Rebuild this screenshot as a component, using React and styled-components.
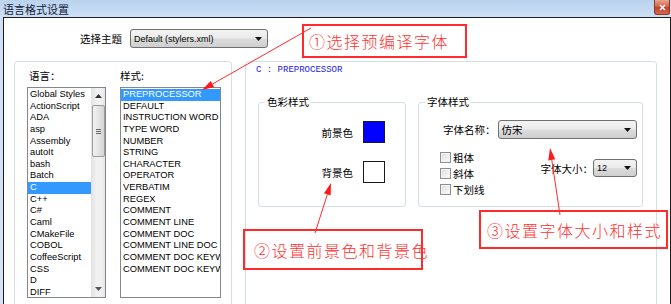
import React from 'react';
import styled, { createGlobalStyle } from 'styled-components';

const GlobalStyle = createGlobalStyle`
  html, body {
    margin: 0;
    padding: 0;
    background: #fff;
  }
  body {
    font-family: "Liberation Sans", "Noto Sans CJK SC", sans-serif;
    color: #000;
  }
`;

const Window = styled.div`
  position: relative;
  width: 671px;
  height: 304px;
  overflow: hidden;
  display: flex;
  flex-direction: column;
  background: linear-gradient(180deg, #bad2ee 0px, #cde0f5 17px, #d4e4f6 100%);
`;

const TitleBar = styled.div`
  flex: none;
  height: 17px;
  display: flex;
  align-items: center;
  padding: 0 1px 0 3px;
  font-family: "Noto Sans CJK SC", sans-serif;
  font-size: 11px;
  color: #14233a;
`;

const CloseBtn = styled.div`
  margin-left: auto;
  align-self: flex-start;
  width: 16px;
  height: 15px;
  box-sizing: border-box;
  border: 1px solid #8a3a2c;
  border-top: none;
  border-radius: 0 0 3px 3px;
  background: linear-gradient(180deg, #e9a490 0%, #d3644a 45%, #c2412a 55%, #d86a4c 100%);
  display: flex;
  align-items: center;
  justify-content: center;
`;

const Body = styled.div`
  flex: 1;
  margin-left: 3px;
  border: 1px solid #1c1c1c;
  border-bottom: none;
  background: #fff;
  display: flex;
  flex-direction: column;
  overflow: hidden;
`;

const ThemeRow = styled.div`
  display: flex;
  align-items: center;
  gap: 8px;
  padding: 11px 0 0 76px;
`;

const CnLabel = styled.span`
  font-family: "Noto Sans CJK SC", sans-serif;
  font-size: 10.5px;
  line-height: 13px;
  white-space: nowrap;
`;

const Select = styled.div`
  position: relative;
  box-sizing: border-box;
  width: ${(p) => p.$w}px;
  height: ${(p) => p.$h || 19}px;
  flex: ${(p) => (p.$grow ? 1 : 'none')};
  border: 1px solid #707070;
  border-radius: 3px;
  background: linear-gradient(180deg, #f3f3f3 0%, #ebebeb 48%, #dcdcdc 52%, #cfcfcf 100%);
  display: flex;
  align-items: center;
  padding: 0 16px 0 3px;
  font-size: 9px;
  white-space: nowrap;
  overflow: hidden;
`;

const Caret = styled.svg`
  position: absolute;
  right: 5px;
  top: 50%;
  margin-top: -2px;
`;

const MainRow = styled.div`
  display: flex;
  gap: 13px;
  margin-top: 13px;
  padding-left: 10px;
`;

const LeftPanel = styled.div`
  box-sizing: border-box;
  width: 218px;
  height: 260px;
  border: 1px solid #d5dfe5;
  border-radius: 3px;
  padding: 7px 0 0 12px;
  display: flex;
  gap: 14px;
`;

const ListColumn = styled.div`
  display: flex;
  flex-direction: column;
  width: ${(p) => p.$w}px;
`;

const ListLabel = styled(CnLabel)`
  padding-left: ${(p) => p.$indent || 0}px;
  margin-bottom: 5px;
`;

const ListBox = styled.div`
  box-sizing: border-box;
  height: 211px;
  border: 1px solid #828790;
  background: #fff;
  display: flex;
  overflow: hidden;
`;

const ListItems = styled.div`
  flex: 1;
  min-width: 0;
  padding-top: 1px;
  overflow: hidden;
`;

const ListItem = styled.div`
  height: 11.65px;
  line-height: 11.65px;
  font-size: 9.3px;
  padding-left: 2px;
  white-space: nowrap;
  overflow: hidden;
  background: ${(p) => (p.$selected ? '#3399ff' : 'transparent')};
  color: ${(p) => (p.$selected ? '#fff' : '#000')};
`;

const ScrollBar = styled.div`
  flex: none;
  width: 14px;
  display: flex;
  flex-direction: column;
  align-items: center;
  background: linear-gradient(90deg, #e3e3e3 0%, #f1f1f1 40%, #f1f1f1 70%, #e6e6e6 100%);
`;

const ScrollButton = styled.div`
  flex: none;
  height: 16px;
  width: 100%;
  display: flex;
  align-items: center;
  justify-content: center;
  margin-top: ${(p) => (p.$bottom ? 'auto' : 0)};
`;

const Thumb = styled.div`
  box-sizing: border-box;
  margin-top: 1px;
  width: 13px;
  height: 52px;
  border: 1px solid #9b9b9b;
  border-radius: 2px;
  background: linear-gradient(90deg, #f2f2f2 0%, #e4e4e4 50%, #d4d4d4 100%);
  display: flex;
  align-items: center;
  justify-content: center;
`;

const RightPanel = styled.div`
  box-sizing: border-box;
  width: 412px;
  height: 260px;
  border: 1px solid #d5dfe5;
  border-radius: 3px;
  padding: 2px 0 0 10px;
`;

const StyleHeader = styled.div`
  font-family: "Liberation Mono", monospace;
  font-size: 9px;
  line-height: 12px;
  color: #2020e8;
  white-space: pre;
`;

const Groups = styled.div`
  display: flex;
  gap: 12px;
  margin-top: 20px;
  padding-left: 2px;
`;

const Group = styled.fieldset`
  box-sizing: border-box;
  width: ${(p) => p.$w}px;
  margin: 0;
  padding: 0;
  border: 1px solid #d5dfe5;
  border-radius: 3px;
`;

const Legend = styled.legend`
  margin-left: 6px;
  padding: 0 2px;
  font-family: "Noto Sans CJK SC", sans-serif;
  font-size: 10.5px;
  line-height: 12px;
`;

const ColorGrid = styled.div`
  display: grid;
  grid-template-columns: auto 22px;
  justify-content: end;
  align-items: center;
  column-gap: 10px;
  row-gap: 18px;
  padding: 13px 20px 22px 0;
`;

const Swatch = styled.div`
  box-sizing: border-box;
  width: 22px;
  height: 22px;
  border: 1px solid #1a1a1a;
  background: ${(p) => p.$color};
`;

const FontBody = styled.div`
  padding: 12px 5px 9px 21px;
`;

const FontNameRow = styled.div`
  display: flex;
  align-items: center;
  gap: 2px;
  margin-left: 3px;
`;

const OptionsRow = styled.div`
  display: flex;
  justify-content: space-between;
  margin-top: 10px;
`;

const CheckColumn = styled.div`
  display: flex;
  flex-direction: column;
`;

const CheckRow = styled.label`
  height: 16px;
  display: flex;
  align-items: center;
  gap: 2px;
`;

const CheckBox = styled.span`
  box-sizing: border-box;
  width: 11px;
  height: 11px;
  border: 1px solid #8e8f8f;
  background: linear-gradient(135deg, #dcdcdc 0%, #f0f0f0 60%, #fbfbfb 100%);
  box-shadow: inset 0 0 0 1px #f4f4f4;
`;

const SizeRow = styled.div`
  display: flex;
  align-items: center;
  margin-top: 10px;
  align-self: flex-start;
`;

const Note = styled.div`
  position: absolute;
  left: ${(p) => p.$x}px;
  top: ${(p) => p.$y}px;
  width: ${(p) => p.$w}px;
  height: ${(p) => p.$h}px;
  box-sizing: border-box;
  border: 2px solid #ff2b2b;
  display: flex;
  align-items: center;
  padding-left: ${(p) => p.$pad}px;
  font-family: "Noto Sans CJK SC", sans-serif;
  font-weight: 300;
  font-size: 16px;
  letter-spacing: 1.5px;
  color: #ff3030;
  white-space: nowrap;
  overflow: visible;
`;

const Overlay = styled.svg`
  position: absolute;
  left: 0;
  top: 0;
  pointer-events: none;
`;

const languages = [
  'Global Styles', 'ActionScript', 'ADA', 'asp', 'Assembly', 'autoIt', 'bash', 'Batch',
  'C', 'C++', 'C#', 'Caml', 'CMakeFile', 'COBOL', 'CoffeeScript', 'CSS', 'D', 'DIFF',
];

const styles = [
  'PREPROCESSOR', 'DEFAULT', 'INSTRUCTION WORD', 'TYPE WORD', 'NUMBER', 'STRING',
  'CHARACTER', 'OPERATOR', 'VERBATIM', 'REGEX', 'COMMENT', 'COMMENT LINE', 'COMMENT DOC',
  'COMMENT LINE DOC', 'COMMENT DOC KEYWORD', 'COMMENT DOC KEYWORD ERROR',
];

function DropCaret() {
  return (
    <Caret width="7" height="4" viewBox="0 0 7 4">
      <path d="M0 0h7L3.5 4z" fill="#111" />
    </Caret>
  );
}

function Dropdown({ w, h, grow, children }) {
  return (
    <Select $w={w} $h={h} $grow={grow}>
      {children}
      <DropCaret />
    </Select>
  );
}

function Arrow({ from, to }) {
  const dx = to[0] - from[0];
  const dy = to[1] - from[1];
  const len = Math.hypot(dx, dy);
  const ux = dx / len;
  const uy = dy / len;
  const bx = to[0] - ux * 12;
  const by = to[1] - uy * 12;
  const px = -uy * 3.5;
  const py = ux * 3.5;
  const pts = `${to[0]},${to[1]} ${bx + px},${by + py} ${bx - px},${by - py}`;
  return (
    <g>
      <line x1={from[0]} y1={from[1]} x2={bx} y2={by} stroke="#ff2b2b" strokeWidth="1" />
      <polygon points={pts} fill="#ff1a1a" />
    </g>
  );
}

export default function App() {
  return (
    <>
      <GlobalStyle />
      <Window>
        <TitleBar>
          语言格式设置
          <CloseBtn>
            <svg width="7" height="7" viewBox="0 0 7 7">
              <path d="M1 1l5 5M6 1L1 6" stroke="#fff" strokeWidth="1.6" />
            </svg>
          </CloseBtn>
        </TitleBar>
        <Body>
          <ThemeRow>
            <CnLabel>选择主题</CnLabel>
            <Dropdown w={138}>Default (stylers.xml)</Dropdown>
          </ThemeRow>
          <MainRow>
            <LeftPanel>
              <ListColumn $w={79}>
                <ListLabel $indent={2}>语言：</ListLabel>
                <ListBox>
                  <ListItems>
                    {languages.map((l) => (
                      <ListItem key={l} $selected={l === 'C'}>{l}</ListItem>
                    ))}
                  </ListItems>
                  <ScrollBar>
                    <ScrollButton>
                      <svg width="7" height="4" viewBox="0 0 7 4"><path d="M0 4h7L3.5 0z" fill="#333" /></svg>
                    </ScrollButton>
                    <Thumb>
                      <svg width="5" height="5" viewBox="0 0 5 5">
                        <path d="M0 0.5h5M0 2.5h5M0 4.5h5" stroke="#6a6a6a" strokeWidth="1" />
                      </svg>
                    </Thumb>
                    <ScrollButton $bottom>
                      <svg width="7" height="4" viewBox="0 0 7 4"><path d="M0 0h7L3.5 4z" fill="#555" /></svg>
                    </ScrollButton>
                  </ScrollBar>
                </ListBox>
              </ListColumn>
              <ListColumn $w={101}>
                <ListLabel>样式:</ListLabel>
                <ListBox>
                  <ListItems>
                    {styles.map((s, i) => (
                      <ListItem key={s} $selected={i === 0}>{s}</ListItem>
                    ))}
                  </ListItems>
                </ListBox>
              </ListColumn>
            </LeftPanel>
            <RightPanel>
              <StyleHeader>C : PREPROCESSOR</StyleHeader>
              <Groups>
                <Group $w={148}>
                  <Legend>色彩样式</Legend>
                  <ColorGrid>
                    <CnLabel>前景色</CnLabel>
                    <Swatch $color="#0000ff" />
                    <CnLabel>背景色</CnLabel>
                    <Swatch $color="#ffffff" />
                  </ColorGrid>
                </Group>
                <Group $w={225}>
                  <Legend>字体样式</Legend>
                  <FontBody>
                    <FontNameRow>
                      <CnLabel>字体名称：</CnLabel>
                      <Dropdown grow h={19}>
                        <CnLabel>仿宋</CnLabel>
                      </Dropdown>
                    </FontNameRow>
                    <OptionsRow>
                      <CheckColumn>
                        {['粗体', '斜体', '下划线'].map((t) => (
                          <CheckRow key={t}>
                            <CheckBox />
                            <CnLabel>{t}</CnLabel>
                          </CheckRow>
                        ))}
                      </CheckColumn>
                      <SizeRow>
                        <CnLabel>字体大小：</CnLabel>
                        <Dropdown w={44} h={18}>12</Dropdown>
                      </SizeRow>
                    </OptionsRow>
                  </FontBody>
                </Group>
              </Groups>
            </RightPanel>
          </MainRow>
        </Body>

        <Note $x={302} $y={24} $w={165} $h={34} $pad={5}>①选择预编译字体</Note>
        <Note $x={243} $y={229} $w={180} $h={41} $pad={9}>②设置前景色和背景色</Note>
        <Note $x={479} $y={210} $w={189} $h={39} $pad={6}>③设置字体大小和样式</Note>

        <Overlay width="671" height="304" viewBox="0 0 671 304">
          <Arrow from={[311, 28]} to={[202, 90]} />
          <Arrow from={[315, 233]} to={[331, 183]} />
          <Arrow from={[560, 215]} to={[550, 148]} />
        </Overlay>
      </Window>
    </>
  );
}
